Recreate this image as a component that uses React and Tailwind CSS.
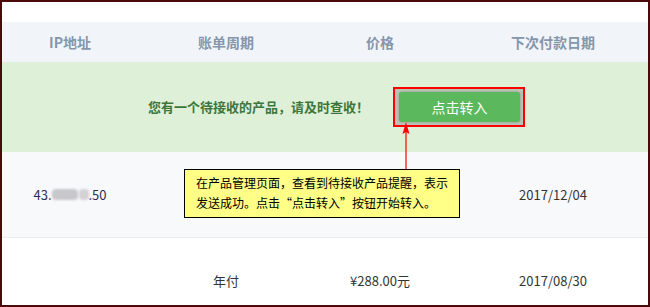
const cols = 'grid grid-cols-[136px_176px_132px_1fr] items-center text-center'

function BlurredIp() {
  return (
    <span className="inline-flex items-center">
      43.
      <span className="inline-block w-[26px] h-[11px] bg-[#c8c8cc] blur-[1.2px] rounded-sm" />
      <span className="inline-block w-[10px] h-[11px] ml-[1px] bg-[#d2d2d6] blur-[1.2px] rounded-sm" />
      .50
    </span>
  )
}

export default function App() {
  return (
    <div className="relative w-[650px] h-[307px] overflow-hidden bg-white border-2 border-[#4a0a0a] font-['Noto_Sans_CJK_SC','Noto_Sans',sans-serif] text-[13px]">
      <div className="h-[20px]" />

      {/* table header */}
      <div className={`${cols} h-[40px] bg-[#f1f5f9] text-[#8696ab] font-bold text-[14px]`}>
        <div>IP地址</div>
        <div>账单周期</div>
        <div>价格</div>
        <div className="pl-[12px]">下次付款日期</div>
      </div>

      {/* pending transfer notice */}
      <div className="h-[90px] bg-[#dff0d8] flex items-center pl-[146px]">
        <span className="text-[#3c763d] font-bold">您有一个待接收的产品，请及时查收！</span>
        <div className="ml-[24px] border-[2px] border-[#ff0000] p-[3px] pl-[4px] bg-[#b9c4b5]">
          <button className="w-[121px] h-[30px] rounded-[3px] bg-[#5cb85c] text-white text-[14px] shadow-[0_0_2px_rgba(0,0,0,0.3)]">
            点击转入
          </button>
        </div>
      </div>

      {/* rows */}
      <div className={`${cols} h-[86px] bg-[#f8f9fb] border-b border-[#ebedf0] text-[#333]`}>
        <div className="text-[#2d2d55]"><BlurredIp /></div>
        <div />
        <div />
        <div className="pl-[12px]">2017/12/04</div>
      </div>
      <div className={`${cols} h-[86px] text-[#333]`}>
        <div />
        <div>年付</div>
        <div>¥288.00元</div>
        <div className="pl-[12px]">2017/08/30</div>
      </div>

      {/* annotation arrow */}
      <svg className="absolute left-[398px] top-[120px]" width="14" height="50" viewBox="0 0 14 50">
        <line x1="6" y1="8" x2="6" y2="50" stroke="#ff0000" strokeWidth="1.2" />
        <polygon points="6,0 2.5,12 6,10 9.5,12" fill="#ff0000" />
      </svg>

      {/* annotation callout */}
      <div className="absolute left-[182px] top-[167px] w-[276px] h-[49px] bg-[#ffff88] border border-black pl-[11px] py-[3px] text-[12px] leading-[20px] text-black whitespace-nowrap">
        <div>在产品管理页面，查看到待接收产品提醒，表示</div>
        <div>发送成功。点击“点击转入”按钮开始转入。</div>
      </div>
    </div>
  )
}
